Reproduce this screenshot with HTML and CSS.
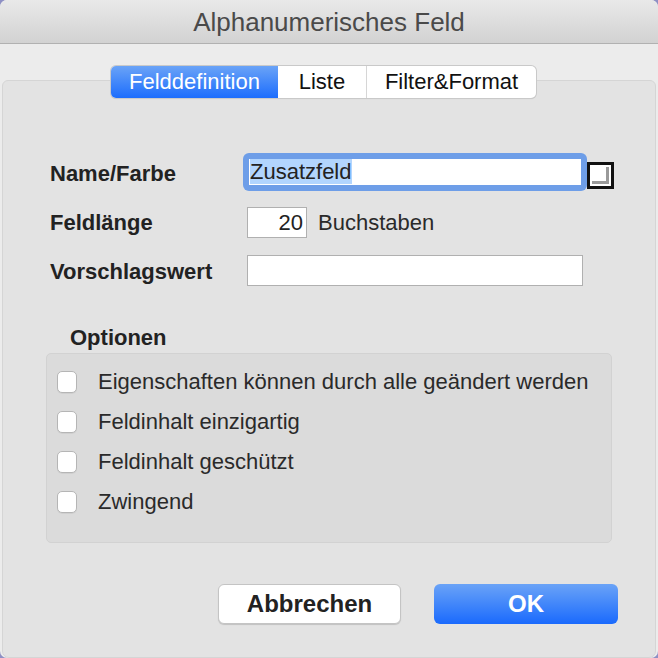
FILE: index.html
```html
<!DOCTYPE html>
<html>
<head>
<meta charset="utf-8">
<link rel="stylesheet" href="styles.css">
</head>
<body>
<div class="window">
  <div class="titlebar">Alphanumerisches Feld</div>
  <div class="content">
    <div class="tabs">
      <div class="tab active">Felddefinition</div>
      <div class="tab">Liste</div>
      <div class="tab last">Filter&amp;Format</div>
    </div>
    <div class="panel">
      <div class="form">
        <div class="row row-name">
          <div class="label">Name/Farbe</div>
          <div class="focus-ring"><div class="input-name"><span class="sel">Zusatzfeld</span></div></div>
          <div class="colorwell"><div class="swatch"></div></div>
        </div>
        <div class="row row-len">
          <div class="label">Feldlänge</div>
          <div class="input-len">20</div>
          <div class="unit">Buchstaben</div>
        </div>
        <div class="row row-def">
          <div class="label">Vorschlagswert</div>
          <div class="input-def"></div>
        </div>
      </div>
      <div class="opt-title">Optionen</div>
      <div class="group">
        <div class="check"><span class="box"></span><span>Eigenschaften können durch alle geändert werden</span></div>
        <div class="check"><span class="box"></span><span>Feldinhalt einzigartig</span></div>
        <div class="check"><span class="box"></span><span>Feldinhalt geschützt</span></div>
        <div class="check"><span class="box"></span><span>Zwingend</span></div>
      </div>
      <div class="buttons">
        <div class="btn cancel">Abbrechen</div>
        <div class="btn ok">OK</div>
      </div>
    </div>
  </div>
</div>
</body>
</html>
```

FILE: styles.css
```css
* { box-sizing: border-box; }
html, body { margin: 0; padding: 0; }
body {
  width: 658px; height: 658px;
  background: #8e90c4;
  font-family: "Liberation Sans", Arial, sans-serif;
  color: #262626;
  overflow: hidden;
}
.window {
  width: 658px; height: 658px;
  border-radius: 7px;
  overflow: hidden;
  background: #ececec;
  display: flex; flex-direction: column;
}
.titlebar {
  height: 44px;
  background: linear-gradient(#e9e9e9, #d2d2d2);
  border-bottom: 1px solid #b1b1b1;
  text-align: center;
  font-size: 26px;
  line-height: 44px;
  color: #4a4a4a;
  flex: none;
}
.content {
  flex: 1;
  position: relative;
  padding: 36px 2px 0 2px;
  display: flex; flex-direction: column;
}
.tabs {
  position: absolute;
  top: 22px; left: 111px;
  display: flex;
  height: 32px;
  border-radius: 5px;
  background: #fff;
  box-shadow: 0 0 0 1px #c9c9c9, 0 1px 1px rgba(0,0,0,0.15);
  z-index: 2;
  font-size: 22px;
  color: #111;
}
.tab {
  line-height: 32px;
  text-align: center;
  border-right: 1px solid #d6d6d6;
}
.tab:nth-child(1) { width: 167px; }
.tab:nth-child(2) { width: 89px; }
.tab:nth-child(3) { width: 169px; border-right: none; }
.tab.active {
  background: linear-gradient(#6aa3f7, #1c6dfd);
  color: #fff;
  border-radius: 5px 0 0 5px;
  border-right: none;
}
.panel {
  flex: 1;
  background: #e3e3e3;
  border: 1px solid #d5d5d5;
  border-radius: 6px 6px 7px 7px;
  padding: 72px 0 0 0;
  display: flex; flex-direction: column;
}
.form { display: flex; flex-direction: column; }
.row { display: flex; align-items: center; }
.label {
  width: 244px;
  padding-left: 47px;
  font-weight: bold;
  font-size: 22px;
  color: #222;
  flex: none;
}
.row-name { height: 38px; }
.row-name .label { padding-top: 4px; }
.focus-ring {
  margin-left: -4px;
  width: 344px; height: 38px;
  background: #6e9ee8;
  border-radius: 6px;
  padding: 6px 6px 6px 6px;
}
.input-name {
  background: #fff;
  height: 26px;
  font-size: 22px;
  line-height: 26px;
  padding-left: 1px;
  color: #222;
}
.sel { background: #b2d5fe; }
.colorwell {
  margin-top: 6px;
  width: 27px; height: 27px;
  border: 3px solid #111;
  background: #fff;
  padding: 0;
  position: relative;
}
.swatch {
  position: absolute;
  left: 2px; top: 2px; right: 2px; bottom: 2px;
  border-right: 3px solid #9a9a9a;
  border-bottom: 3px solid #9a9a9a;
}
.row-len { margin-top: 16px; height: 31px; }
.input-len {
  width: 60px; height: 31px;
  background: #fff;
  border: 1px solid #b0b0b0;
  font-size: 22px;
  line-height: 29px;
  text-align: right;
  padding-right: 3px;
  color: #222;
}
.unit { margin-left: 11px; font-size: 22px; color: #2a2a2a; }
.row-def { margin-top: 17px; height: 31px; }
.row-def .label { padding-top: 3px; }
.input-def {
  width: 336px; height: 31px;
  background: #fff;
  border: 1px solid #b0b0b0;
}
.opt-title {
  margin-top: 39px;
  padding-left: 67px;
  font-weight: bold;
  font-size: 22px;
  color: #222;
  height: 28px;
}
.group {
  margin-left: 43px;
  width: 566px;
  height: 190px;
  background: #dbdbdb;
  border: 1px solid #d2d2d2;
  border-radius: 5px;
  padding: 17px 0 0 10px;
  display: flex; flex-direction: column;
  gap: 18px;
}
.check {
  display: flex; align-items: center;
  height: 22px;
  font-size: 22px;
  color: #2a2a2a;
}
.box {
  width: 20px; height: 22px;
  background: #fff;
  border: 1px solid #b5b5b5;
  border-radius: 5px;
  margin-right: 21px;
  flex: none;
  box-shadow: 0 1px 0 rgba(0,0,0,0.05);
}
.buttons {
  display: flex;
  margin-top: 41px;
  padding-left: 215px;
  gap: 33px;
}
.btn {
  height: 40px;
  border-radius: 6px;
  font-size: 24px;
  font-weight: bold;
  text-align: center;
  line-height: 38px;
}
.cancel {
  width: 183px;
  background: #fff;
  border: 1px solid #c4c4c4;
  box-shadow: 0 1px 1px rgba(0,0,0,0.15);
  color: #222;
}
.ok {
  width: 184px;
  background: linear-gradient(#6aa3f7, #1a6afd);
  color: #fff;
  line-height: 40px;
}
```
